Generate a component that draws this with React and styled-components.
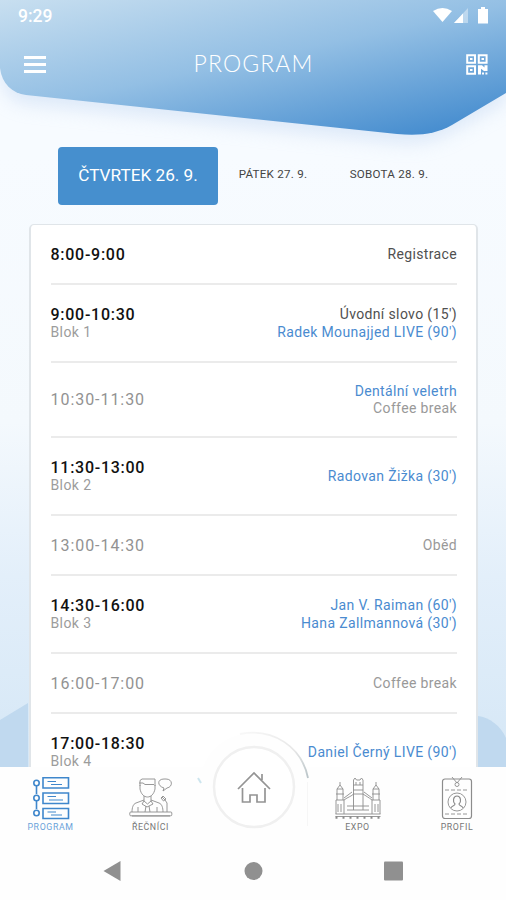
import React from 'react';
import styled, { createGlobalStyle } from 'styled-components';

const GlobalStyle = createGlobalStyle`
    * {
        box-sizing: border-box;
    }
    body {
        margin: 0;
        font-family: Roboto, "Liberation Sans", sans-serif;
    }
`

const Screen = styled.div`
    position: relative;
    display: flex;
    flex-direction: column;
    width: 506px;
    height: 900px;
    overflow: hidden;
    background-color: #fefefe;
`

const Backdrop = styled.svg`
    position: absolute;
    top: 0;
    left: 0;
`

const Header = styled.header`
    position: relative;
    flex: none;
    height: 146px;
    color: #fff;
`

const StatusBar = styled.div`
    display: flex;
    justify-content: space-between;
    align-items: center;
    height: 32px;
    padding: 0 15px 0 18px;
    font-size: 17.5px;
    font-weight: 500;
`

const StatusIcons = styled.div`
    display: flex;
    height: 18px;
`

const TitleBar = styled.div`
    display: flex;
    justify-content: space-between;
    align-items: center;
    height: 64px;
    padding: 0 18px 0 24px;
`

const Title = styled.h1`
    margin: 0 5px 0 0;
    padding-bottom: 3px;
    font-family: Lato, sans-serif;
    font-size: 23px;
    font-weight: 300;
    letter-spacing: 1.1px;
`

const Burger = styled.div`
    display: flex;
    flex-direction: column;
    gap: 3.5px;
    width: 22px;
    padding-top: 1px;

    > span {
        height: 3.5px;
        background-color: #fff;
    }
`

const Days = styled.nav`
    position: relative;
    display: flex;
    flex: none;
    align-items: center;
    height: 59px;
    padding-left: 58px;
`

const Day = styled.div`
    width: ${props => props.$width}px;
    line-height: 56px;
    border-radius: 4px;
    text-align: center;
    font-size: ${props => (props.$active ? '17.2px' : '11.6px')};
    letter-spacing: ${props => (props.$active ? '0' : '0.25px')};
    color: ${props => (props.$active ? '#fff' : '#444')};
    background-color: ${props => (props.$active ? '#468fce' : 'transparent')};
    padding-bottom: ${props => (props.$active ? '2px' : '4px')};
`

const Content = styled.main`
    position: relative;
    flex: 1;
    min-height: 0;
    overflow: hidden;
    padding: 19px 28px 0 29px;
`

const Card = styled.div`
    height: 600px;
    padding: 0 19px 0 19.5px;
    border: 2px solid #e0e5e9;
    border-top-width: 1px;
    border-radius: 5px;
    background-color: #fff;
`

const Row = styled.div`
    display: flex;
    justify-content: space-between;
    align-items: center;
    height: ${props => props.$height}px;
    padding-top: 2px;
    border-bottom: 2px solid #ebebeb;
`

const Time = styled.div`
    font-size: 16px;
    line-height: 20px;
    letter-spacing: ${props => (props.$muted ? '0.95px' : '0.73px')};
    font-weight: ${props => (props.$muted ? 400 : 500)};
    color: ${props => (props.$muted ? '#929292' : '#111')};
`

const Block = styled.div`
    margin: 1px 0 4px;
    font-size: 14px;
    line-height: 12px;
    letter-spacing: 0.4px;
    color: #9c9c9c;
`

const Talks = styled.div`
    text-align: right;
    font-size: 14px;
    line-height: 17.5px;
    letter-spacing: 0.36px;
`

const talkColors = {
    plain: '#505050',
    link: '#4a8bd0',
    muted: '#999',
}

const Talk = styled.div`
    color: ${props => talkColors[props.$kind]};
`

const TabBar = styled.nav`
    position: relative;
    display: grid;
    grid-template-columns: 101px 99px 107px 101px 98px;
    flex: none;
    height: 73px;
    background-color: #fefefe;
`

const Tab = styled.div`
    display: flex;
    flex-direction: column;
    align-items: center;
    gap: 1.5px;
    padding-top: 9px;
    font-size: 8.8px;
    line-height: 11px;
    letter-spacing: 0.6px;
    color: ${props => (props.$active ? '#6aa3da' : '#777')};

    svg {
        display: block;
        flex: none;
        fill: none;
        stroke: ${props => (props.$active ? '#3f87cc' : '#8c8c8c')};
        stroke-width: ${props => (props.$active ? 1.6 : 0.9)};
    }
`

const HomeButton = styled.svg`
    position: absolute;
    left: 190px;
    top: -47px;
`

const SystemNav = styled.div`
    display: flex;
    flex: none;
    align-items: flex-start;
    justify-content: center;
    gap: 120px;
    height: 60px;
    padding-top: 20px;
    background-color: #fefefe;
`

const days = [
    { label: 'ČTVRTEK 26. 9.', width: 160, active: true },
    { label: 'PÁTEK 27. 9.', width: 110 },
    { label: 'SOBOTA 28. 9.', width: 122 },
]

const program = [
    { time: '8:00-9:00', height: 60, talks: [['plain', 'Registrace']] },
    { time: '9:00-10:30', block: 'Blok 1', height: 77.5, talks: [['plain', "Úvodní slovo (15')"], ['link', "Radek Mounajjed LIVE (90')"]] },
    { time: '10:30-11:30', muted: true, height: 75.5, talks: [['link', 'Dentální veletrh'], ['muted', 'Coffee break']] },
    { time: '11:30-13:00', block: 'Blok 2', height: 77.5, talks: [['link', "Radovan Žižka (30')"]] },
    { time: '13:00-14:30', muted: true, height: 60, talks: [['muted', 'Oběd']] },
    { time: '14:30-16:00', block: 'Blok 3', height: 78, talks: [['link', "Jan V. Raiman (60')"], ['link', "Hana Zallmannová (30')"]] },
    { time: '16:00-17:00', muted: true, height: 60, talks: [['muted', 'Coffee break']] },
    { time: '17:00-18:30', block: 'Blok 4', height: 78, talks: [['link', "Daniel Černý LIVE (90')"]] },
]

const Background = () => (
    <Backdrop width="506" height="768" viewBox="0 0 506 768">
        <defs>
            <linearGradient id="page" x1="0" y1="0" x2="0" y2="1">
                <stop offset="0.2" stopColor="#f7fbff" />
                <stop offset="0.55" stopColor="#f4f9fd" />
                <stop offset="0.75" stopColor="#e3effa" />
                <stop offset="1" stopColor="#d5e7f6" />
            </linearGradient>
            <linearGradient id="head" gradientUnits="userSpaceOnUse" x1="0" y1="0" x2="46" y2="216">
                <stop offset="0" stopColor="#c8dff0" />
                <stop offset="0.5" stopColor="#93bfe4" />
                <stop offset="1" stopColor="#468dcf" />
            </linearGradient>
            <filter id="soft" x="-10%" y="-10%" width="120%" height="140%">
                <feGaussianBlur stdDeviation="9" />
            </filter>
        </defs>
        <rect width="506" height="768" fill="url(#page)" />
        <path d="M0 720L28 703V768H0Z" fill="#c0d9ef" />
        <path d="M478 716C489 717 501 726 506 738V768H478Z" fill="#c0d9ef" />
        <path d="M0 68C2 84 12 94 26 96L397 135C420 137 436 133 452 124L506 94V0H0Z" transform="translate(0 8)" fill="#c3d7f2" opacity="0.5" filter="url(#soft)" />
        <path d="M0 0H506V93L452 125C436 134 420 136 397 134L26 95C12 93 2 84 0 68Z" fill="url(#head)" />
    </Backdrop>
)

const QrIcon = () => (
    <svg width="22" height="21" viewBox="0 0 22 21">
        <path d="M1.2 1.2H9V8.8H1.2ZM12.8 1.2H20.6V8.8H12.8ZM1.2 12.2H9V19.8H1.2Z" fill="none" stroke="#fff" strokeWidth="2" />
        <path d="M4 4H6.5V6H4ZM15.5 4H18V6H15.5ZM4 15H6.5V17H4ZM12 11.2H16L18.5 13.5V11.2H21.5V17H18L15 14.8V20.5H12ZM16 18.5H18V20.5H16ZM19.4 18.5H21.4V20.5H19.4Z" fill="#fff" />
    </svg>
)

const ProgramIcon = () => (
    <svg width="38" height="44" viewBox="0 0 38 44">
        <path d="M4.5 9V18M4.5 24V33" />
        <circle cx="4.5" cy="7" r="2.7" />
        <circle cx="4.5" cy="22" r="2.7" />
        <circle cx="4.5" cy="37" r="2.7" />
        <path d="M11 1.8H36.5V12H11ZM11 17H36.5V27.5H11ZM11 32.5H36.5V42.5H11Z" />
        <path d="M15.5 5.5H24M19 8.5H30M15.5 20.5H24M17 24H31M15.5 36H24M19 39H30" strokeWidth="1.2" />
    </svg>
)

const SpeakerIcon = () => (
    <svg width="44" height="44" viewBox="0 0 44 44">
        <path d="M11 10V4.5L13 3H26V10M10 7H14L16 8.5H25M11 9V13C12 18 15 21 18.5 21S25 18 26 13V9M15 20V25L18.5 28L22 25V20M15 24L7 27C4 28 3 32 3 36M22 24L30 27C33 28 34 32 34 36M9 31V36M28 31V36M15 25L13 28L18 31L24 28L22 25M17 30L16 36M20 30L21 36" />
        <rect x="0.8" y="36" width="42" height="3.8" rx="1" />
        <path d="M3 40H41M33 21L36 24M32 22L34.5 25L37 23L34 20ZM36 24L38 27V36" />
        <path d="M35 12C28 10 28 3 35 3H37C44 3 44 11 38 12L34 15Z" />
    </svg>
)

const ExpoIcon = () => (
    <svg width="46" height="44" viewBox="0 0 46 44">
        <path d="M18.5 18V4L20 2L21.5 4H25L26.5 2L28 4V18M18.5 9H28M18.5 14H28M21 6V9M25 6V9M18.5 18V34M28 18V34M1 38V24H9V38M37 38V24H45V38M2 24V13H8V24M38 24V13H44V24M2 13L5 9L8 13M38 13L41 9L44 13M5 9V6M41 9V6M1 18H9M37 18H45M9 24C13 21 17 20 18.5 18H28C31 20 33 21 37 24M9 22L17 16M29 16L37 22M3 28V36M6 28V36M40 28V36M43 28V36M12 30H34M12 34H34M0.5 38H45.5" />
        <path d="M0.5 41.5H45.5" strokeDasharray="2 5" strokeWidth="2.5" />
        <path d="M0.5 40.5H45.5" />
    </svg>
)

const ProfileIcon = () => (
    <svg width="32" height="44" viewBox="0 0 32 44">
        <rect x="1.5" y="3" width="29" height="39.5" rx="2.5" strokeWidth="1.2" />
        <path d="M11 1L16 7L21 1" />
        <circle cx="16" cy="8.5" r="2" />
        <path d="M4 14H28M4 38H28" strokeDasharray="4 2" />
        <circle cx="16" cy="26" r="9" />
        <path d="M10 32C10 30 14 30 14 28C11.5 26 12 20 16 20S20.5 26 18 28C18 30 22 30 22 32" strokeWidth="1.2" />
    </svg>
)

export default class App extends React.Component {
    render() {
        return (
            <Screen>
                <GlobalStyle />
                <Background />
                <Header>
                    <StatusBar>
                        <span>9:29</span>
                        <StatusIcons>
                            <svg width="58" height="18" viewBox="0 0 58 18">
                                <path d="M0 4Q9.5 -2 19 4L9.5 15Z" fill="#fff" />
                                <path d="M35 1V16H21Z" fill="#fff" opacity="0.4" />
                                <path d="M30 6.5V16H21Z" fill="#fff" />
                                <path d="M45 2H48V0H52V2H55V16.5H45Z" fill="#fff" />
                            </svg>
                        </StatusIcons>
                    </StatusBar>
                    <TitleBar>
                        <Burger>
                            <span />
                            <span />
                            <span />
                        </Burger>
                        <Title>PROGRAM</Title>
                        <QrIcon />
                    </TitleBar>
                </Header>
                <Days>
                    {days.map(day => (
                        <Day key={day.label} $width={day.width} $active={day.active}>{day.label}</Day>
                    ))}
                </Days>
                <Content>
                    <Card>
                        {program.map(row => (
                            <Row key={row.time} $height={row.height}>
                                <div>
                                    <Time $muted={row.muted}>{row.time}</Time>
                                    {row.block && <Block>{row.block}</Block>}
                                </div>
                                <Talks>
                                    {row.talks.map(([kind, text]) => (
                                        <Talk key={text} $kind={kind}>{text}</Talk>
                                    ))}
                                </Talks>
                            </Row>
                        ))}
                    </Card>
                </Content>
                <TabBar>
                    <HomeButton width="130" height="115" viewBox="0 0 130 115">
                        <defs>
                            <linearGradient id="rim" x1="0" y1="0" x2="1" y2="1">
                                <stop offset="0" stopColor="#f8f8f8" />
                                <stop offset="0.6" stopColor="#e6e6e6" />
                                <stop offset="1" stopColor="#b9c4c8" />
                            </linearGradient>
                        </defs>
                        <path d="M13 47C22 24 42 13 64 13C90 13 112 29 118 58V70H13Z" fill="#fefefe" />
                        <path d="M50 14C84 7 112 28 118 58" fill="none" stroke="url(#rim)" strokeWidth="1.8" />
                        <path d="M8 58L11 63" stroke="#cde5ee" strokeWidth="2" />
                        <path d="M117.5 62V106" stroke="#f6f6f6" />
                        <circle cx="64" cy="67" r="40" fill="#fff" stroke="#f0f0f0" strokeWidth="2.5" />
                        <path d="M48 69L64 53L80 69M52.5 68V82H60V75H67V82H75V68M72 60V54" fill="none" stroke="#949494" strokeWidth="1.7" />
                    </HomeButton>
                    <Tab $active>
                        <ProgramIcon />
                        PROGRAM
                    </Tab>
                    <Tab>
                        <SpeakerIcon />
                        ŘEČNÍCI
                    </Tab>
                    <div />
                    <Tab>
                        <ExpoIcon />
                        EXPO
                    </Tab>
                    <Tab>
                        <ProfileIcon />
                        PROFIL
                    </Tab>
                </TabBar>
                <SystemNav>
                    <svg width="20" height="22" viewBox="0 0 20 22">
                        <path d="M0.5 11L17.5 1V21Z" fill="#909090" />
                    </svg>
                    <svg width="20" height="22" viewBox="0 0 20 22">
                        <circle cx="10.5" cy="11" r="9" fill="#909090" />
                    </svg>
                    <svg width="20" height="22" viewBox="0 0 20 22">
                        <rect x="1" y="1.5" width="19" height="19" rx="1" fill="#909090" />
                    </svg>
                </SystemNav>
            </Screen>
        );
    }
}
